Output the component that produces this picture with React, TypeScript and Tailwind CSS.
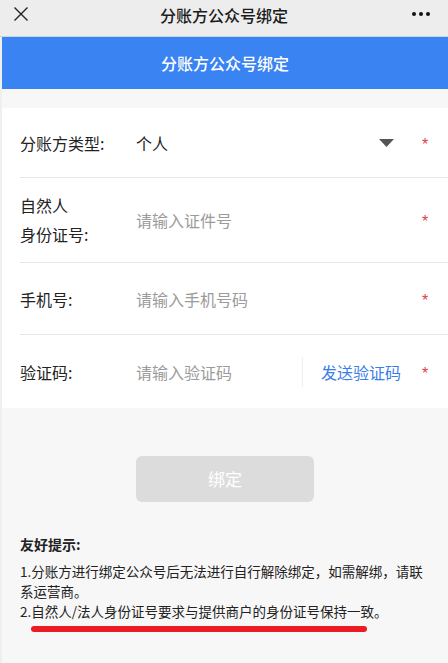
import React from "react";

function Star() {
  return <span className="w-[8px] text-center text-[16px] leading-none text-[#e0423f] font-['Liberation_Sans',sans-serif] translate-y-[2px]">*</span>;
}

export default function App() {
  return (
    <div className="w-[448px] min-h-[663px] bg-[#f7f7f7] font-['Noto_Sans_CJK_SC',sans-serif] flex flex-col">
      <div className="relative h-[37px] bg-[#ededed] border-b border-[#cbd3db] flex items-center justify-center shrink-0">
        <svg className="absolute left-[13px] top-[6px]" width="16" height="16" viewBox="0 0 16 16">
          <path d="M1.5 1.5 L14.5 14.5 M14.5 1.5 L1.5 14.5" stroke="#222" strokeWidth="1.4" fill="none" />
        </svg>
        <span className="text-[16px] leading-none text-[#1b1b1b] font-medium -translate-y-[3px]">分账方公众号绑定</span>
        <svg className="absolute left-[411px] top-[11px]" width="20" height="6" viewBox="0 0 20 6">
          <circle cx="3" cy="3" r="2" fill="#111" />
          <circle cx="10" cy="3" r="2" fill="#111" />
          <circle cx="17" cy="3" r="2" fill="#111" />
        </svg>
      </div>
      <div className="flex-1 flex flex-col border-l-2 border-[#efefef]">
        <div className="h-[52px] bg-[#3a83f2] flex items-center justify-center">
          <span className="text-white text-[16px] font-medium">分账方公众号绑定</span>
        </div>
        <div className="bg-white mt-[19px] text-[16px] text-[#222]">
          <div className="ml-[18px] h-[70px] border-b border-[#e6e6e6] flex items-center pr-[19px]">
            <span className="w-[116px]">分账方类型:</span>
            <span className="flex-1">个人</span>
            <svg className="mr-[27px]" width="15" height="8" viewBox="0 0 15 8">
              <path d="M0 0 L15 0 L7.5 8 Z" fill="#555" />
            </svg>
            <Star />
          </div>
          <div className="ml-[18px] h-[85px] border-b border-[#e6e6e6] flex items-center pr-[19px]">
            <span className="w-[116px] leading-[29px]">自然人<br />身份证号:</span>
            <span className="flex-1 text-[#9b9b9b]">请输入证件号</span>
            <Star />
          </div>
          <div className="ml-[18px] h-[72px] border-b border-[#e6e6e6] flex items-center pr-[19px]">
            <span className="w-[116px]">手机号:</span>
            <span className="flex-1 text-[#9b9b9b]">请输入手机号码</span>
            <Star />
          </div>
          <div className="ml-[18px] h-[73px] flex items-center pr-[19px]">
            <span className="w-[116px]">验证码:</span>
            <span className="flex-1 text-[#9b9b9b]">请输入验证码</span>
            <span className="w-px h-[30px] bg-[#eeeeee]"></span>
            <span className="ml-[18px] mr-[20px] text-[#3a7ee8]">发送验证码</span>
            <Star />
          </div>
        </div>
        <div className="mt-[48px] flex justify-center">
          <div className="w-[178px] h-[46px] rounded-[6px] bg-[#dcdcdc] flex items-center justify-center text-white text-[17px]">绑定</div>
        </div>
        <div className="mt-[32px] pl-[18px] pr-[20px] text-[#222]">
          <div className="text-[14px] leading-[20px] font-bold">友好提示:</div>
          <div className="mt-[7px] text-[13.5px] leading-[20px]">
            <div>1.分账方进行绑定公众号后无法进行自行解除绑定，如需解绑，请联系运营商。</div>
            <div>2.自然人/法人身份证号要求与提供商户的身份证号保持一致。</div>
          </div>
          <div className="mt-[5px] ml-[11px] w-[336px] h-[6px] rounded-full bg-[#ed1c24]"></div>
        </div>
      </div>
    </div>
  );
}
